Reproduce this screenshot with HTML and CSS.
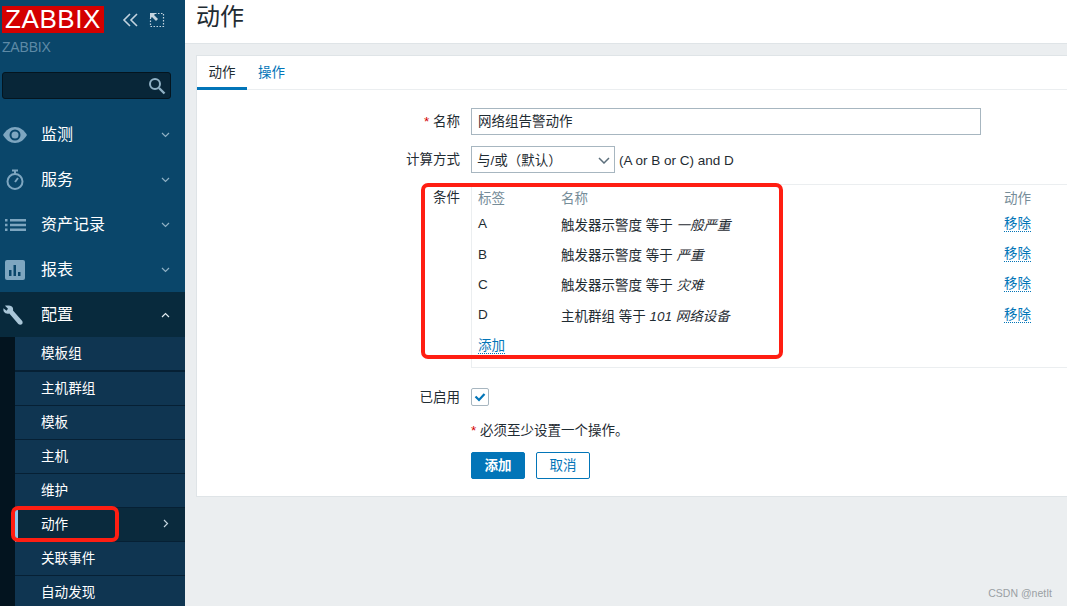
FILE: index.html
```html
<!DOCTYPE html>
<html lang="zh">
<head>
<meta charset="utf-8">
<title>动作</title>
<link rel="stylesheet" href="styles.css">
</head>
<body>
<div class="app">
  <aside class="sidebar">
    <div class="brand">
      <span class="logo">ZABBIX</span>
      <svg class="tool" width="20" height="16" viewBox="0 0 20 16"><path d="M9 2 3 8l6 6M16 2l-6 6 6 6" fill="none" stroke="#c3d3de" stroke-width="1.6"/></svg>
      <svg class="tool" width="16" height="16" viewBox="0 0 16 16"><path d="M6 1.500h8.500V14.500H1.500V6" fill="none" stroke="#c3d3de" stroke-width="1.200" stroke-dasharray="1.500 1.500"/><path d="M1 1h6L5 3l4 4-2 2-4-4-2 2z" fill="#c3d3de"/></svg>
    </div>
    <div class="server">ZABBIX</div>
    <div class="search">
      <svg width="18" height="18" viewBox="0 0 18 18"><circle cx="7" cy="7" r="5" fill="none" stroke="#8fb0c4" stroke-width="2"/><path d="m11 11 5.500 5.500" stroke="#8fb0c4" stroke-width="2.400"/></svg>
    </div>
    <nav class="menu">
      <div class="item">
        <svg class="ico" width="26" height="18" viewBox="0 0 26 18"><path d="M1 9c3-5 7-8 12-8s9 3 12 8c-3 5-7 8-12 8S4 14 1 9z" fill="#7ea6c0"/><circle cx="13" cy="9" r="5.500" fill="#0a466a"/><circle cx="13" cy="9" r="3.500" fill="#7ea6c0"/></svg>
        <span class="label">监测</span>
        <svg class="chev" width="9" height="6" viewBox="0 0 9 6"><path d="m1 1 3.500 3.500L8 1" fill="none" stroke="#8fb0c4" stroke-width="1.200"/></svg>
      </div>
      <div class="item">
        <svg class="ico" width="26" height="22" viewBox="0 0 26 22"><circle cx="13" cy="12.500" r="7.500" fill="none" stroke="#7ea6c0" stroke-width="2"/><path d="M10 1.500h6M13 1.500V5M13 13l3-4" stroke="#7ea6c0" stroke-width="2" fill="none"/></svg>
        <span class="label">服务</span>
        <svg class="chev" width="9" height="6" viewBox="0 0 9 6"><path d="m1 1 3.500 3.500L8 1" fill="none" stroke="#8fb0c4" stroke-width="1.200"/></svg>
      </div>
      <div class="item">
        <svg class="ico" width="26" height="14" viewBox="0 0 26 14"><path d="M3 1h2.500v2.500H3zM3 5.800h2.500v2.500H3zM3 10.500h2.500V13H3zM8 1h16v2.500H8zM8 5.800h16v2.500H8zM8 10.500h16V13H8z" fill="#7ea6c0"/></svg>
        <span class="label">资产记录</span>
        <svg class="chev" width="9" height="6" viewBox="0 0 9 6"><path d="m1 1 3.500 3.500L8 1" fill="none" stroke="#8fb0c4" stroke-width="1.200"/></svg>
      </div>
      <div class="item">
        <svg class="ico" width="26" height="20" viewBox="0 0 26 20"><rect x="3" width="20" height="20" rx="2" fill="#7ea6c0"/><path d="M7 10h2.500v6H7zM11.500 5H14v11h-2.500zM16 12h2.500v4H16z" fill="#0a466a"/></svg>
        <span class="label">报表</span>
        <svg class="chev" width="9" height="6" viewBox="0 0 9 6"><path d="m1 1 3.500 3.500L8 1" fill="none" stroke="#8fb0c4" stroke-width="1.200"/></svg>
      </div>
      <div class="item open">
        <svg class="ico" width="26" height="22" viewBox="0 0 26 22"><path d="M5 1.500c-1-.2-1.500 0-2 .3l3 3-1.500 2-3-2.500c-.5 2 .2 4 2 5 1.500.7 3 .5 3.800.2l9 10.500c1 1 3 1 3.800 0s.7-2.500-.3-3.500L11 6.500c.3-1.500 0-3-1.200-4C8.500 1.500 6.500 1.300 5 1.500z" fill="#a9c6d8"/></svg>
        <span class="label">配置</span>
        <svg class="chev" width="9" height="6" viewBox="0 0 9 6"><path d="M1 5 4.500 1.500 8 5" fill="none" stroke="#e2ecf2" stroke-width="1.200"/></svg>
      </div>
      <div class="sub">
        <div class="subitem">模板组</div>
        <div class="subitem">主机群组</div>
        <div class="subitem">模板</div>
        <div class="subitem">主机</div>
        <div class="subitem">维护</div>
        <div class="subitem current">动作
          <svg class="chev" width="6" height="9" viewBox="0 0 6 9"><path d="m1 1 3.500 3.500L1 8" fill="none" stroke="#c3d3de" stroke-width="1.200"/></svg>
        </div>
        <div class="subitem">关联事件</div>
        <div class="subitem">自动发现</div>
      </div>
    </nav>
  </aside>
  <main class="main">
    <header class="topbar"><h1>动作</h1></header>
    <section class="card">
      <div class="tabs">
        <span class="tab active">动作</span>
        <span class="tab">操作</span>
      </div>
      <form class="form">
        <div class="lbl lbl-name"><span class="req">*</span> 名称</div>
        <div class="val"><div class="input">网络组告警动作</div></div>
        <div class="lbl lbl-calc">计算方式</div>
        <div class="val calc">
          <div class="select">与/或（默认）
            <svg width="12" height="7" viewBox="0 0 12 7"><path d="m1 1 5 5 5-5" fill="none" stroke="#5c6f7c" stroke-width="1.500"/></svg>
          </div>
          <span class="formula">(A or B or C) and D</span>
        </div>
        <div class="lbl lbl-cond">条件</div>
        <div class="val">
          <div class="conds">
            <div class="row head"><span>标签</span><span>名称</span><span>动作</span></div>
            <div class="row"><span>A</span><span>触发器示警度 等于 <em>一般严重</em></span><a>移除</a></div>
            <div class="row"><span>B</span><span>触发器示警度 等于 <em>严重</em></span><a>移除</a></div>
            <div class="row"><span>C</span><span>触发器示警度 等于 <em>灾难</em></span><a>移除</a></div>
            <div class="row"><span>D</span><span>主机群组 等于 <em>101 网络设备</em></span><a>移除</a></div>
            <div class="row addrow"><a>添加</a></div>
          </div>
        </div>
        <div class="lbl lbl-on">已启用</div>
        <div class="val on">
          <span class="check"><svg width="12" height="10" viewBox="0 0 12 10"><path d="m1.500 4.500 3.500 3.500 5.500-6" fill="none" stroke="#0275b8" stroke-width="2.200"/></svg></span>
        </div>
        <div></div>
        <div class="val note"><span class="req">*</span> 必须至少设置一个操作。</div>
        <div></div>
        <div class="val buttons">
          <span class="btn primary">添加</span>
          <span class="btn">取消</span>
        </div>
      </form>
    </section>
    <div class="watermark">CSDN @netIt</div>
  </main>
</div>
<div class="mark mark-table"></div>
<div class="mark mark-menu"></div>
</body>
</html>
```
FILE: styles.css
```css
* { box-sizing: border-box; }
html, body { margin: 0; height: 100%; overflow: hidden; }
body {
  font-family: "Liberation Sans", "Noto Sans CJK SC", sans-serif;
  font-size: 13.5px;
  color: #1f2c33;
  background: #ebeef0;
}
.app { display: flex; height: 606px; }

/* sidebar */
.sidebar { width: 185px; flex: none; background: #0a466a; overflow: hidden; color: #fff; }
.brand { display: flex; align-items: center; height: 33px; padding: 6px 0 0 2px; }
.logo {
  width: 102px; height: 27px; background: #d40000; color: #fff;
  font-size: 26px; line-height: 27px; text-align: center; letter-spacing: .6px;
}
.tool { margin-left: 17px; }
.tool + .tool { margin-left: 8px; }
.server { margin: 6px 0 0 2px; height: 17px; line-height: 17px; font-size: 14px; letter-spacing: -.2px; color: #5e8aa6; }
.search {
  display: flex; align-items: center; justify-content: flex-end;
  width: 169px; height: 27px; margin: 16px 0 0 2px; padding-right: 4px;
  background: #082638; border: 1px solid #04151f; border-radius: 3px;
}
.menu { margin-top: 13px; }
.item { display: flex; align-items: center; height: 45px; padding: 0 15px 0 2px; }
.item .ico { flex: none; }
.item .label { margin: 0 0 3px 13px; font-size: 16px; flex: 1; }
.item.open { background: #082a3d; }
.sub { background: #03141f; padding-left: 15px; }
.subitem {
  display: flex; align-items: center; justify-content: space-between;
  height: 34px; padding: 0 16px 3px 26px;
  font-size: 13.6px; background: #0f3551; border-bottom: 1px solid #062034;
}
.subitem:first-child { height: 35px; border-bottom-width: 2px; }
.subitem.current { background: #0a2a3d; border-left: 3px solid #8fc8ee; padding-left: 23px; }

/* main */
.main { flex: 1; min-width: 0; }
.topbar { height: 44px; background: #fff; border-bottom: 1px solid #dfe4e7; padding-left: 11px; }
h1 { margin: 0; font-size: 24px; font-weight: 400; line-height: 34px; color: #1f2c33; }
.card {
  height: 442px; margin: 11px 0 0 11px;
  background: #fff; border: 1px solid #dfe4e7; border-right: 0;
}
.tabs { display: flex; height: 34px; border-bottom: 1px solid #ebeef0; }
.tab {
  width: 50px; height: 34px; line-height: 33px; text-align: center;
  color: #0275b8; font-size: 13.5px;
}
.tab + .tab { width: auto; margin-left: 11px; }
.tab.active { color: #1f2c33; border-bottom: 3px solid #0275b8; }
.form { display: grid; grid-template-columns: 263px 1fr; column-gap: 11px; padding-top: 18px; }
.lbl { text-align: right; line-height: 27px; }
.req { color: #d40000; }
.input, .select { height: 27px; line-height: 25px; border: 1px solid #a7b6c0; background: #fff; }
.input { width: 510px; padding-left: 6px; }
.lbl-calc, .calc { margin-top: 11px; }
.calc { display: flex; align-items: center; gap: 4px; }
.formula { padding-top: 2px; }
.select {
  display: flex; align-items: center; justify-content: space-between;
  width: 144px; padding: 2px 4px 0 5px;
}
.lbl-cond { margin-top: 17px; line-height: 14px; padding-top: 1px; }
.val { min-width: 0; }
.conds {
  margin-top: 11px; height: 184px;
  border-left: 1px solid #ebeef0; border-top: 1px solid #ebeef0; border-bottom: 1px solid #ebeef0;
  padding-left: 6px;
}
.row { display: grid; grid-template-columns: 83px 443px auto; height: 30.400px; padding-bottom: 1px; align-items: center; }
.row.head { height: 24px; color: #768d99; }
.row a { color: #0275b8; justify-self: start; border-bottom: 1px dotted #0275b8; line-height: 15px; }
.row em { font-style: italic; }
.addrow { display: block; padding: 7px 0 0; }
.addrow a { display: inline-block; }
.lbl-on { margin-top: 20px; padding-top: 1px; line-height: 17px; }
.on { margin-top: 20px; height: 18px; }
.check {
  display: flex; align-items: center; justify-content: center;
  width: 18px; height: 18px; border: 1px solid #a7b6c0; border-radius: 2px;
}
.note { margin-top: 16px; line-height: 18px; }
.buttons { display: flex; gap: 11px; margin-top: 12px; }
.btn {
  width: 54px; height: 27px; line-height: 25px; text-align: center;
  border: 1px solid #0275b8; border-radius: 2px; color: #0275b8;
}
.btn.primary { background: #0275b8; color: #fff; font-weight: 700; }
.watermark { position: absolute; right: 15px; bottom: 7px; font-size: 10.5px; color: #9aa0a4; }

/* red annotations drawn over the screenshot */
.mark { position: absolute; border: 4px solid #ff1e12; border-radius: 7px; }
.mark-table { left: 421px; top: 183px; width: 362px; height: 176px; }
.mark-menu { left: 11px; top: 506px; width: 108px; height: 36px; }
```
